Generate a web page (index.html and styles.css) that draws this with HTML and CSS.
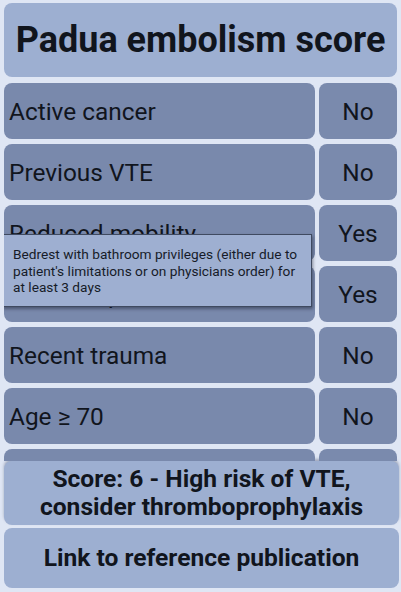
FILE: index.html
```html
<!DOCTYPE html>
<html>
<head>
<meta charset="utf-8">
<link rel="stylesheet" href="styles.css">
</head>
<body>
<div class="app">
  <div class="title">Padua embolism score</div>
  <div class="list">
    <div class="row"><div class="label">Active cancer</div><div class="value">No</div></div>
    <div class="row"><div class="label">Previous VTE</div><div class="value">No</div></div>
    <div class="row"><div class="label">Reduced mobility</div><div class="value">Yes</div></div>
    <div class="row"><div class="label">Thrombophilia</div><div class="value">Yes</div></div>
    <div class="row"><div class="label">Recent trauma</div><div class="value">No</div></div>
    <div class="row"><div class="label">Age ≥ 70</div><div class="value">No</div></div>
    <div class="row"><div class="label"></div><div class="value"></div></div>
    <div class="tooltip">Bedrest with bathroom privileges (either due to patient's limitations or on physicians order) for at least 3 days</div>
  </div>
  <div class="footer">
    <div class="panel score">Score: 6 - High risk of VTE,<br>consider thromboprophylaxis</div>
    <div class="panel link">Link to reference publication</div>
  </div>
</div>
</body>
</html>
```
FILE: styles.css
```css
html, body {
  margin: 0;
  padding: 0;
  background: #dfe6f4;
  font-family: Roboto, "Noto Sans", sans-serif;
  color: #11151d;
}
.app {
  width: 401px;
  height: 592px;
  overflow: hidden;
  padding: 3px 4px 0 4px;
  box-sizing: border-box;
  display: flex;
  flex-direction: column;
}
.title {
  height: 74px;
  flex: none;
  background: #9dafd1;
  border-radius: 8px;
  display: flex;
  align-items: center;
  justify-content: center;
  font-weight: bold;
  font-size: 36px;
  white-space: nowrap;
  margin-bottom: 6px;
}
.list {
  position: relative;
  height: 378px;
  flex: none;
  overflow: hidden;
}
.row {
  display: flex;
  gap: 4px;
  height: 56px;
  margin-bottom: 5px;
}
.label {
  width: 311px;
  flex: none;
  background: #7989ac;
  border-radius: 8px;
  display: flex;
  align-items: center;
  padding-left: 5px;
  box-sizing: border-box;
  font-size: 24.4px;
  white-space: nowrap;
  overflow: hidden;
}
.value {
  flex: 1;
  background: #7a8aad;
  border-radius: 8px;
  display: flex;
  align-items: center;
  justify-content: center;
  font-size: 24.4px;
}
.tooltip {
  position: absolute;
  left: -2px;
  top: 151px;
  width: 310px;
  height: 73px;
  box-sizing: border-box;
  padding: 11px 6px 0 10px;
  background: #9eafd1;
  border: 1px solid #3f4a60;
  box-shadow: 1px 2px 3px rgba(20, 25, 40, 0.45);
  font-size: 13.7px;
  line-height: 16.5px;
  color: #161b28;
}
.footer {
  flex: none;
  display: flex;
  flex-direction: column;
  gap: 3px;
  margin-right: -2px;
}
.panel {
  background: #9dafd1;
  border-radius: 8px;
  display: flex;
  align-items: center;
  justify-content: center;
  text-align: center;
  font-weight: bold;
  font-size: 24.6px;
  line-height: 28px;
  white-space: nowrap;
}
.score {
  height: 64px;
  box-shadow: 0 -2px 3px rgba(40, 50, 80, 0.35);
}
.link {
  height: 60px;
}
```
